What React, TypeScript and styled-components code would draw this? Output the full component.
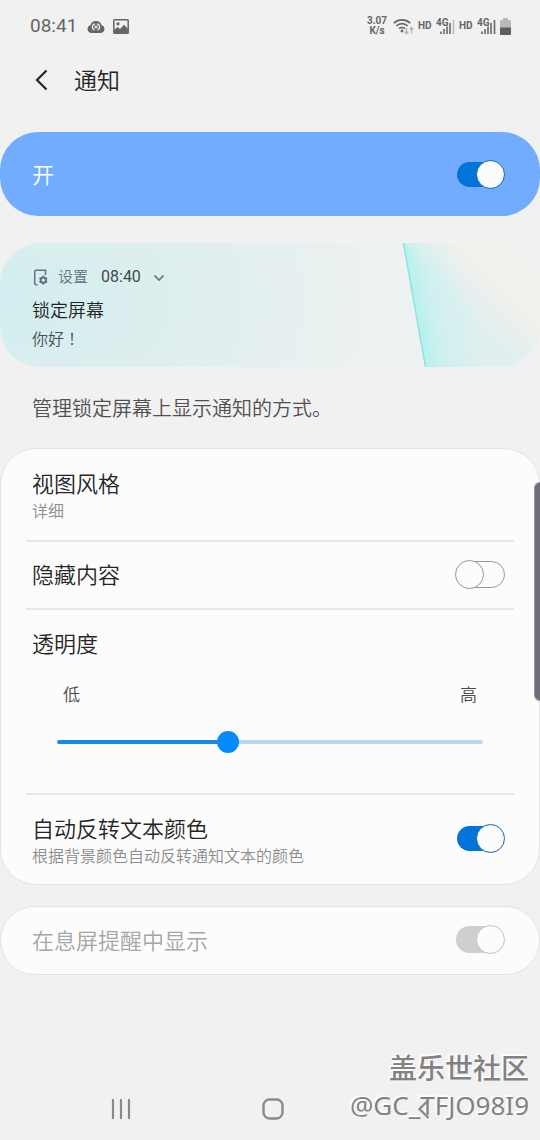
import React, { useState } from "react";
import styled, { createGlobalStyle, css } from "styled-components";

const GlobalStyle = createGlobalStyle`
  *, *::before, *::after { box-sizing: border-box; }
  body {
    margin: 0;
    background: #f1f1f1;
    color: #252525;
    font-family: Roboto, "Noto Sans CJK SC", sans-serif;
    font-weight: 350;
  }
  button { border: 0; padding: 0; background: none; color: inherit; font: inherit; cursor: pointer; }
  h1, h2, p { margin: 0; font-weight: inherit; }
`;

const Page = styled.div`
  display: flex;
  flex-direction: column;
  min-height: 100vh;
`;

const StatusBar = styled.header`
  display: flex;
  align-items: center;
  justify-content: space-between;
  height: 54px;
  padding: 0 29px 2px 30px;
  color: #666;
`;

const StatusGroup = styled.div<{ $gap: number }>`
  display: flex;
  align-items: center;
  gap: ${(p) => p.$gap}px;
`;

const Clock = styled.span`
  font-size: 19px;
  font-weight: 400;
  line-height: 24px;
  margin-right: 2px;
`;

const NetSpeed = styled.span`
  display: flex;
  flex-direction: column;
  min-width: 22px;
  margin-right: 1px;
  font-size: 10px;
  font-weight: 700;
  line-height: 10px;
  text-align: center;
`;

const HdLabel = styled.span`
  min-width: 14px;
  font-size: 10px;
  font-weight: 700;
  line-height: 12px;
`;

const TitleBar = styled.div`
  display: flex;
  align-items: center;
  gap: 16px;
  height: 52px;
  padding: 0 24px;
  margin-bottom: 26px;
`;

const BackButton = styled.button`
  display: grid;
  place-items: center;
  width: 34px;
  height: 34px;
`;

const PageTitle = styled.h1`
  padding-top: 3px;
  font-size: 23px;
  line-height: 34px;
`;

const MasterCard = styled.label`
  display: flex;
  align-items: center;
  justify-content: space-between;
  min-height: 84px;
  padding: 0 35px 0 32px;
  border-radius: 38px;
  background: #71acff;
  color: #fff;
  font-size: 22px;
  line-height: 32px;
`;

const MasterText = styled.span`
  padding-top: 3px;
`;

const Preview = styled.section`
  position: relative;
  overflow: hidden;
  min-height: 124px;
  margin-top: 27px;
  padding: 22px 32px 0;
  border-radius: 40px;
  background: radial-gradient(ellipse 370px 260px at 0 45%, #d2eef0 0%, #deeeee 45%, #ecf1f1 100%);
`;

const PreviewArt = styled.svg`
  position: absolute;
  top: 0;
  right: 0;
  width: 140px;
  height: 100%;
`;

const PreviewMeta = styled.div`
  display: flex;
  align-items: center;
  height: 24px;
`;

const PreviewApp = styled.span`
  margin: 0 13px 0 9px;
  font-size: 15px;
  line-height: 20px;
  padding-bottom: 1px;
  color: #5c7280;
`;

const PreviewTime = styled.time`
  font-size: 16px;
  font-weight: 400;
  line-height: 20px;
  color: #404a4b;
`;

const MetaChevron = styled.svg`
  margin: 2px 0 0 12px;
`;

const PreviewTitle = styled.h2`
  margin-top: 8px;
  font-size: 18px;
  line-height: 28px;
`;

const PreviewText = styled.p`
  margin-top: 3px;
  font-family: Roboto, "Noto Sans CJK JP", sans-serif;
  font-size: 16px;
  line-height: 24px;
  color: #4a5050;
`;

const Description = styled.p`
  padding: 27px 32px 24px;
  font-size: 20px;
  line-height: 30px;
  color: #505050;
`;

const Card = styled.section`
  padding: 0 25px;
  border: 1px solid #e3e3e3;
  border-radius: 36px;
  background: #fcfcfc;

  & + & { margin-top: 21px; }
`;

const rowStyle = css<{ $height: number; $divider?: boolean }>`
  display: flex;
  align-items: center;
  justify-content: space-between;
  width: 100%;
  min-height: ${(p) => p.$height}px;
  padding: 0 9px 2px 6px;
  text-align: left;
  ${(p) => p.$divider && "border-bottom: 2px solid #e6e6e6;"}
`;

const ToggleRow = styled.label<{ $height: number; $divider?: boolean }>`
  ${rowStyle}
`;

const LinkRow = styled.button<{ $height: number; $divider?: boolean }>`
  && { ${rowStyle} }
`;

const RowText = styled.span<{ $noted?: boolean }>`
  display: flex;
  flex-direction: column;
  padding-top: ${(p) => (p.$noted ? 8 : 4)}px;
`;

const RowTitle = styled.span<{ $muted?: boolean }>`
  font-size: 22px;
  line-height: 28px;
  color: ${(p) => (p.$muted ? "#a6a6a6" : "#252525")};
`;

const RowNote = styled.span`
  font-size: 16px;
  line-height: 26px;
  color: #8c8c8c;
`;

const SliderRow = styled.div`
  display: flex;
  flex-direction: column;
  min-height: 185px;
  padding: 21px 6px 0;
  border-bottom: 2px solid #e6e6e6;
`;

const SliderEnds = styled.div`
  display: flex;
  justify-content: space-between;
  margin-top: 24px;
  padding: 0 31px;
  font-size: 17px;
  line-height: 24px;
  color: #4a4a4a;
`;

const Slider = styled.input`
  appearance: none;
  height: 24px;
  margin: 23px 25px 0;
  background: transparent;

  &::-webkit-slider-runnable-track {
    height: 4px;
    border-radius: 2px;
    background: linear-gradient(to right, #1787e8 var(--filled), #b3d9f7 var(--filled));
  }
  &::-webkit-slider-thumb {
    appearance: none;
    width: 22px;
    height: 22px;
    margin-top: -9px;
    border-radius: 50%;
    background: #038bff;
  }
`;

const Switch = styled.input`
  appearance: none;
  display: grid;
  grid-template-columns: 50px;
  align-items: center;
  flex: none;
  width: 50px;
  height: 30px;
  margin: 0;

  &::before, &::after {
    content: "";
    grid-area: 1 / 1;
  }
  &::before {
    width: 46px;
    height: 27px;
    border: 1px solid #969696;
    border-radius: 14px;
    justify-self: end;
  }
  &::after {
    width: 29px;
    height: 29px;
    border: 1px solid #969696;
    border-radius: 50%;
    background: #fcfcfc;
  }
  &:checked::before {
    height: 25px;
    border: 0;
    background: #0074d8;
    justify-self: center;
  }
  &:checked::after {
    justify-self: end;
    border-color: #0f65b0;
  }
  &:disabled::before { background: #cfcfcf; height: 27px; width: 48px; }
  &:disabled::after { border-color: #c2c2c2; }
`;

const NavBar = styled.nav`
  position: relative;
  z-index: 1;
  display: flex;
  align-items: center;
  justify-content: space-between;
  height: 62px;
  margin-top: auto;
  padding: 0 17% 0 18%;
`;

const NavButton = styled.button`
  display: grid;
  place-items: center;
  width: 48px;
  height: 48px;
`;

const EdgeHandle = styled.div`
  position: absolute;
  top: 482px;
  right: 0;
  width: 6px;
  height: 219px;
  border: 1px solid #9a98a5;
  border-right: 0;
  border-radius: 6px 0 0 6px;
  background: #6d6c7b;
`;

const Watermark = styled.div`
  position: absolute;
  right: 11px;
  bottom: 16px;
  text-align: right;
  font-family: "Noto Sans", "Noto Sans CJK SC", sans-serif;
  font-size: 28px;
  font-weight: 500;
  line-height: 37px;
  color: #828282;
  text-shadow: -1px -1px 0 #fff, -2px -2px 0 #fafafa;
  pointer-events: none;
`;

const WatermarkUser = styled.div`
  font-size: 26px;
  font-weight: 400;
`;

function CloudIcon() {
  return (
    <svg width="18" height="13" viewBox="0 0 18 13" aria-hidden="true">
      <path d="M4 13a4 4 0 0 1-.6-7.800A5.800 5.800 0 0 1 14.600 5.200 4 4 0 0 1 14 13Z" fill="#666" />
      <path d="M8 3.800a3.200 3.200 0 0 0-.4 6.200M10 3.800a3.200 3.200 0 0 1 .4 6.200M8.200 5.600v3M9.900 5.600v3" fill="none" stroke="#f1f1f1" strokeWidth="1.200" />
    </svg>
  );
}

function ImageIcon() {
  return (
    <svg width="16" height="15" viewBox="0 0 16 15" aria-hidden="true">
      <rect x="0.800" y="0.800" width="14.400" height="13.400" rx="0.800" fill="none" stroke="#666" strokeWidth="1.500" />
      <circle cx="5" cy="4.800" r="1.600" fill="#666" />
      <path d="M1 11l3.500-3 2.500 2 4-4.200L15 10v4.200H1Z" fill="#666" />
    </svg>
  );
}

function WifiIcon() {
  return (
    <svg width="21" height="17" viewBox="0 0 21 17" aria-hidden="true">
      <g fill="none" stroke="#666" strokeWidth="1.700">
        <path d="M.8 5.200a12 12 0 0 1 16.400 0" />
        <path d="M3.400 8a8 8 0 0 1 11.200 0" />
        <path d="M6 10.700a4.400 4.400 0 0 1 6 0" />
      </g>
      <circle cx="9" cy="13" r="1.400" fill="#666" />
      <path d="M13.500 10v5.500M11.700 13.800l1.800 2 1.800-2M18.500 15.500V10M16.700 11.500l1.800-2 1.800 2" fill="none" stroke="#b5b5b5" strokeWidth="1.300" />
    </svg>
  );
}

function SignalIcon({ full }: { full?: boolean }) {
  return (
    <svg width="19" height="18" viewBox="0 0 19 18" role="img" aria-label="4G">
      <path d="M5 17v-2.500M8 17v-5M11 17v-8M14 17V6" stroke="#666" strokeWidth="1.600" />
      <path d="M17.500 17V3" stroke={full ? "#666" : "#bbb"} strokeWidth="1.600" />
      <text x="0" y="9" fontFamily="Roboto, sans-serif" fontSize="10" fontWeight="700" fill="#666" stroke="#f1f1f1" strokeWidth="1.500" paintOrder="stroke">4G</text>
    </svg>
  );
}

function BatteryIcon() {
  return (
    <svg width="11" height="17" viewBox="0 0 11 17" aria-hidden="true">
      <path d="M3 0h5v2h2a1 1 0 0 1 1 1v7H0V3a1 1 0 0 1 1-1h2Z" fill="#b9b9b9" />
      <path d="M0 9.500h11V16a1 1 0 0 1-1 1H1a1 1 0 0 1-1-1Z" fill="#5f5f5f" />
    </svg>
  );
}

function LockSettingsIcon() {
  return (
    <svg width="17" height="17" viewBox="0 0 17 17" aria-hidden="true">
      <path d="M5.500 15.700H4.200a1.500 1.500 0 0 1-1.500-1.500V2.700A1.500 1.500 0 0 1 4.200 1.200h9.300V6" fill="none" stroke="#607582" strokeWidth="1.500" />
      <circle cx="11.300" cy="11.200" r="2.600" fill="none" stroke="#607582" strokeWidth="2" />
      <path d="M11.300 6.800v1.800M11.300 13.800v1.800M7.500 9l1.600.9M13.500 12.500l1.600.9M7.500 13.400l1.600-.9M13.500 9.900l1.600-.9" stroke="#607582" strokeWidth="2" />
    </svg>
  );
}

const OPACITY_MAX = 255;

export default function App() {
  const [opacity, setOpacity] = useState(101);
  const filled = { "--filled": `${(opacity / OPACITY_MAX) * 100}%` } as React.CSSProperties;

  return (
    <Page>
      <GlobalStyle />
      <StatusBar>
        <StatusGroup $gap={8}>
          <Clock>08:41</Clock>
          <CloudIcon />
          <ImageIcon />
        </StatusGroup>
        <StatusGroup $gap={4}>
          <NetSpeed>
            <span>3.07</span>
            <span>K/s</span>
          </NetSpeed>
          <WifiIcon />
          <HdLabel>HD</HdLabel>
          <SignalIcon />
          <HdLabel>HD</HdLabel>
          <SignalIcon full />
          <BatteryIcon />
        </StatusGroup>
      </StatusBar>

      <TitleBar>
        <BackButton aria-label="返回">
          <svg width="14" height="22" viewBox="0 0 14 22" aria-hidden="true">
            <path d="M12.500 1.500 3 11l9.500 9.500" fill="none" stroke="#252525" strokeWidth="2.200" />
          </svg>
        </BackButton>
        <PageTitle>通知</PageTitle>
      </TitleBar>

      <main>
        <MasterCard>
          <MasterText>开</MasterText>
          <Switch type="checkbox" defaultChecked />
        </MasterCard>

        <Preview>
          <PreviewArt viewBox="0 0 140 124" preserveAspectRatio="none" aria-hidden="true">
            <defs>
              <linearGradient id="sheet" gradientUnits="userSpaceOnUse" x1="12" y1="60" x2="72" y2="48">
                <stop offset="0" stopColor="#b4f1ee" />
                <stop offset="0.350" stopColor="#d0f0ee" />
                <stop offset="1" stopColor="#e0f0f0" />
              </linearGradient>
              <linearGradient id="warm" gradientUnits="userSpaceOnUse" x1="68" y1="70" x2="98" y2="40">
                <stop offset="0" stopColor="#f1f0ec" stopOpacity="0" />
                <stop offset="1" stopColor="#f1f0ec" />
              </linearGradient>
            </defs>
            <path d="M3 0H140V124H25Z" fill="url(#sheet)" />
            <path d="M3 0H140V124H25Z" fill="url(#warm)" />
            <path d="M3.500 0 25.500 124" stroke="#8fe3e3" strokeWidth="1.500" />
          </PreviewArt>
          <PreviewMeta>
            <LockSettingsIcon />
            <PreviewApp>设置</PreviewApp>
            <PreviewTime>08:40</PreviewTime>
            <MetaChevron width="12" height="8" viewBox="0 0 12 8" aria-hidden="true">
              <path d="M1.500 1.500 6 6l4.500-4.500" fill="none" stroke="#607582" strokeWidth="1.700" />
            </MetaChevron>
          </PreviewMeta>
          <PreviewTitle>锁定屏幕</PreviewTitle>
          <PreviewText>你好！</PreviewText>
        </Preview>

        <Description>管理锁定屏幕上显示通知的方式。</Description>

        <Card>
          <LinkRow $height={93} $divider>
            <RowText $noted>
              <RowTitle>视图风格</RowTitle>
              <RowNote>详细</RowNote>
            </RowText>
          </LinkRow>
          <ToggleRow $height={68} $divider>
            <RowText>
              <RowTitle>隐藏内容</RowTitle>
            </RowText>
            <Switch type="checkbox" />
          </ToggleRow>
          <SliderRow>
            <RowTitle as="label" htmlFor="opacity">透明度</RowTitle>
            <SliderEnds>
              <span>低</span>
              <span>高</span>
            </SliderEnds>
            <Slider
              id="opacity"
              type="range"
              min={0}
              max={OPACITY_MAX}
              value={opacity}
              onChange={(e) => setOpacity(Number(e.target.value))}
              style={filled}
            />
          </SliderRow>
          <ToggleRow $height={89}>
            <RowText $noted>
              <RowTitle>自动反转文本颜色</RowTitle>
              <RowNote>根据背景颜色自动反转通知文本的颜色</RowNote>
            </RowText>
            <Switch type="checkbox" defaultChecked />
          </ToggleRow>
        </Card>

        <Card>
          <ToggleRow $height={67}>
            <RowText>
              <RowTitle $muted>在息屏提醒中显示</RowTitle>
            </RowText>
            <Switch type="checkbox" defaultChecked disabled />
          </ToggleRow>
        </Card>
      </main>

      <NavBar>
        <NavButton aria-label="最近">
          <svg width="20" height="20" viewBox="0 0 20 20" aria-hidden="true">
            <path d="M2 1v18M10 1v18M18 1v18" stroke="#8a8a8a" strokeWidth="2.200" strokeLinecap="round" />
          </svg>
        </NavButton>
        <NavButton aria-label="主页">
          <svg width="22" height="22" viewBox="0 0 22 22" aria-hidden="true">
            <rect x="1.500" y="1.500" width="19" height="19" rx="6" fill="none" stroke="#8a8a8a" strokeWidth="2.400" />
          </svg>
        </NavButton>
        <NavButton aria-label="返回">
          <svg width="14" height="20" viewBox="0 0 14 20" aria-hidden="true">
            <path d="M11.500 1 2.500 10l9 9" fill="none" stroke="#8a8a8a" strokeWidth="2.300" />
          </svg>
        </NavButton>
      </NavBar>

      <EdgeHandle />
      <Watermark>
        盖乐世社区
        <WatermarkUser>@GC_TFJO98I9</WatermarkUser>
      </Watermark>
    </Page>
  );
}
